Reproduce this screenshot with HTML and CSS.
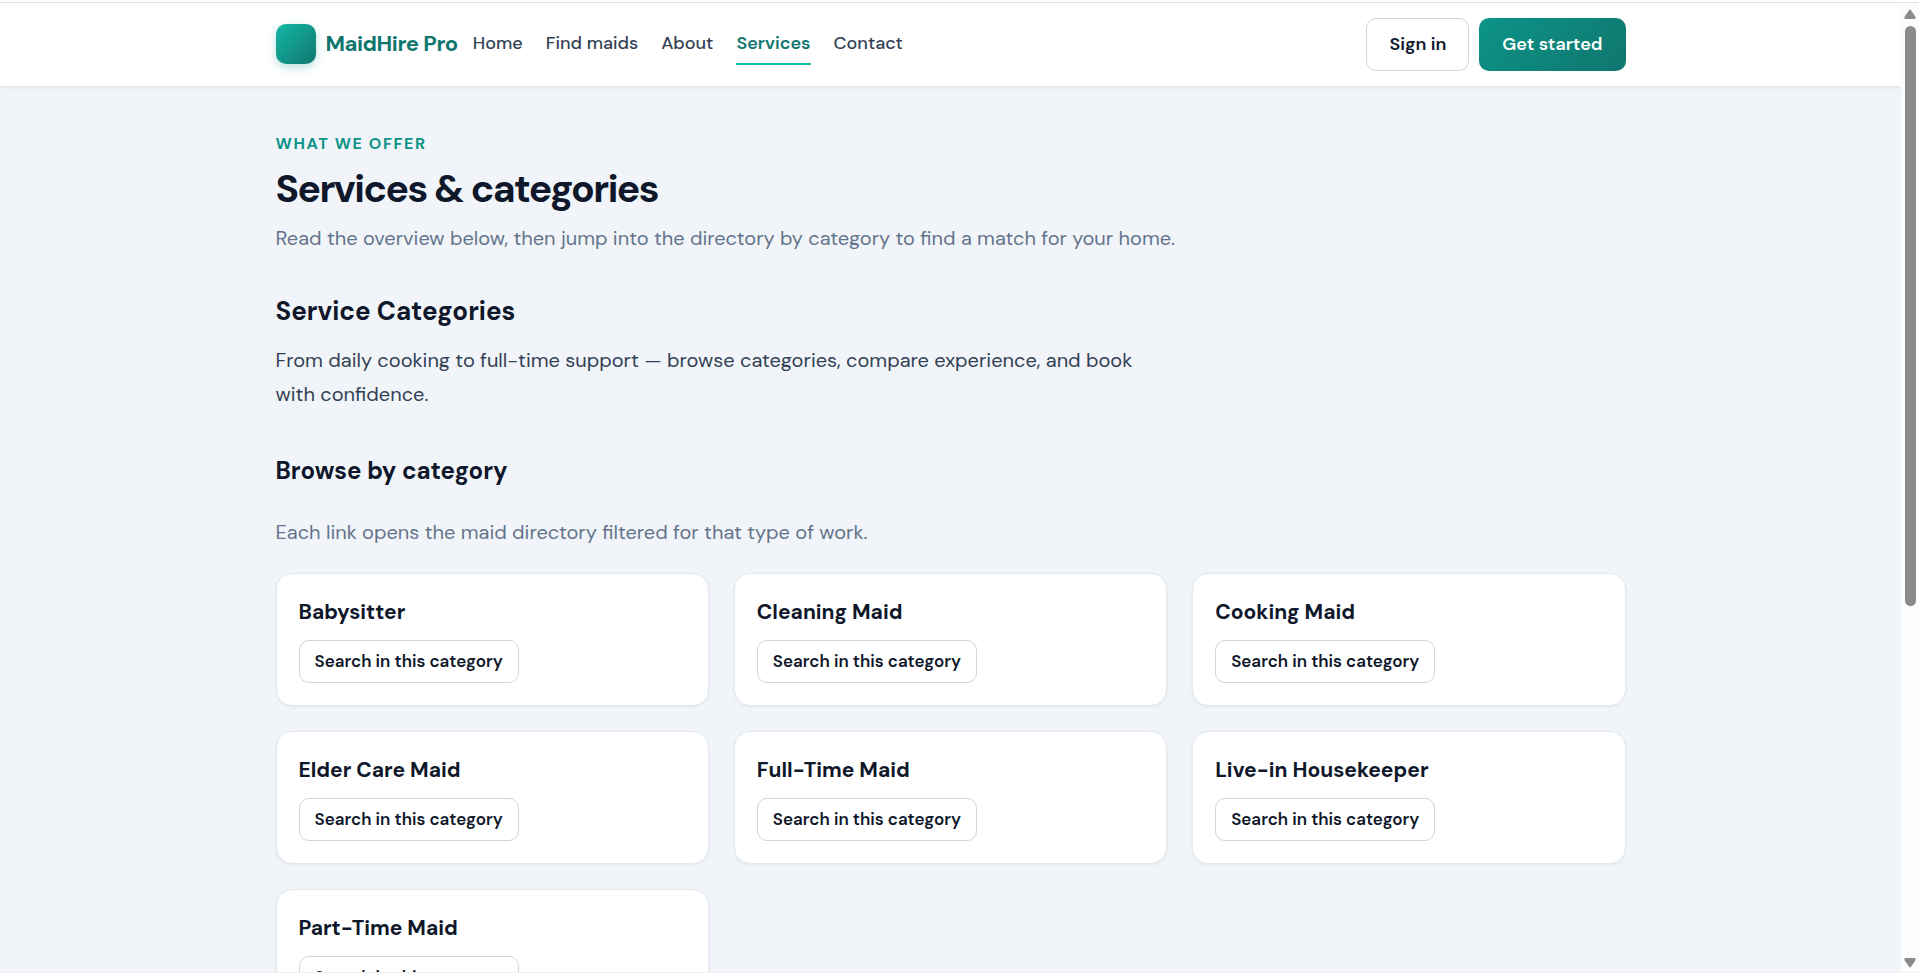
FILE: index.html
```html
<!DOCTYPE html>
<html lang="en">
<head>
  <meta charset="UTF-8">
  <meta name="viewport" content="width=device-width, initial-scale=1.0">
  <title>Services - MaidHire Pro</title>
  <link rel="stylesheet" href="styles.css">
</head>
<body>
  <div class="viewport">
    <div class="page">
      <!-- Header -->
      <header class="site-header">
        <div class="container header-inner">
          <a class="brand" href="#"><span class="brand-mark"></span>MaidHire Pro</a>
          <nav class="main-nav">
            <a href="#">Home</a>
            <a href="#">Find maids</a>
            <a href="#">About</a>
            <a class="active" href="#">Services</a>
            <a href="#">Contact</a>
          </nav>
          <div class="header-actions">
            <a class="btn btn-outline" href="#">Sign in</a>
            <a class="btn btn-primary" href="#">Get started</a>
          </div>
        </div>
      </header>

      <main class="container content">
        <p class="eyebrow">What we offer</p>
        <h1>Services &amp; categories</h1>
        <p class="lead">Read the overview below, then jump into the directory by category to find a match for your home.</p>

        <section class="overview">
          <h2>Service Categories</h2>
          <p>From daily cooking to full-time support — browse categories, compare experience, and book with confidence.</p>
        </section>

        <!-- Category cards -->
        <section class="browse">
          <h3>Browse by category</h3>
          <p class="lead">Each link opens the maid directory filtered for that type of work.</p>
          <div class="card-grid">
            <article class="card">
              <h4>Babysitter</h4>
              <a class="btn btn-outline btn-sm" href="#">Search in this category</a>
            </article>
            <article class="card">
              <h4>Cleaning Maid</h4>
              <a class="btn btn-outline btn-sm" href="#">Search in this category</a>
            </article>
            <article class="card">
              <h4>Cooking Maid</h4>
              <a class="btn btn-outline btn-sm" href="#">Search in this category</a>
            </article>
            <article class="card">
              <h4>Elder Care Maid</h4>
              <a class="btn btn-outline btn-sm" href="#">Search in this category</a>
            </article>
            <article class="card">
              <h4>Full-Time Maid</h4>
              <a class="btn btn-outline btn-sm" href="#">Search in this category</a>
            </article>
            <article class="card">
              <h4>Live-in Housekeeper</h4>
              <a class="btn btn-outline btn-sm" href="#">Search in this category</a>
            </article>
            <article class="card">
              <h4>Part-Time Maid</h4>
              <a class="btn btn-outline btn-sm" href="#">Search in this category</a>
            </article>
          </div>
        </section>
      </main>
    </div>

    <!-- Scrollbar -->
    <div class="scrollbar" aria-hidden="true">
      <svg class="arrow" viewBox="0 0 12 10"><path d="M5 1.2Q6 0 7 1.2L11.6 8Q12 10 10.500 10H1.500Q0 10 .4 8Z"/></svg>
      <div class="track"><div class="thumb"></div></div>
      <svg class="arrow" viewBox="0 0 12 10"><path d="M5 8.800Q6 10 7 8.800L11.6 2Q12 0 10.500 0H1.500Q0 0 .4 2Z"/></svg>
    </div>
  </div>
</body>
</html>
```
FILE: styles.css
```css
* {
  box-sizing: border-box;
}
body {
  margin: 0;
  font-family: "DM Sans", Inter, sans-serif;
  font-size: 20px;
  line-height: 34px;
  color: #334155;
  background: #fff;
}
h1, h2, h3, h4, p {
  margin: 0;
}
h1, h2, h3, h4 {
  color: #0f172a;
}
a {
  color: inherit;
  text-decoration: none;
}
.viewport {
  display: flex;
  height: calc(100vh - 2px);
  margin-top: 2px;
  overflow: hidden;
  border-top: 1px solid #dde1e4;
  border-bottom: 1px solid #f1f1f1;
}
.page {
  flex: 1;
  min-width: 0;
  background: #f1f5f9;
}
.container {
  width: 100%;
  max-width: 1400px;
  margin: 0 auto;
  padding: 0 25px;
}
/* Header */
.site-header {
  background: #fff;
  border-bottom: 1px solid #e2e8f0;
  box-shadow: 0 1px 3px rgba(15, 23, 42, 0.05);
}
.header-inner {
  display: flex;
  align-items: center;
  height: 83px;
}
.brand {
  display: flex;
  align-items: center;
  gap: 10px;
  margin-bottom: 2px;
  font-size: 22px;
  font-weight: 700;
  letter-spacing: -0.02em;
  white-space: nowrap;
  color: #0f766e;
}
.brand-mark {
  width: 40px;
  height: 40px;
  border-radius: 10px;
  background: linear-gradient(135deg, #14b8a6, #0f766e);
  box-shadow: 0 3px 10px rgba(13, 148, 136, 0.3);
}
.main-nav {
  display: flex;
  gap: 23px;
  margin: 0 0 3px 15px;
  font-size: 18px;
  font-weight: 500;
  white-space: nowrap;
}
.main-nav a {
  padding: 5px 0 4px;
  line-height: 32px;
  border-bottom: 2px solid transparent;
}
.main-nav .active {
  color: #0f766e;
  font-weight: 600;
  border-bottom-color: #14b8a6;
}
.header-actions {
  display: flex;
  gap: 10px;
  margin-left: auto;
}
/* Buttons */
.btn {
  display: inline-block;
  padding: 0 22px;
  border: 1px solid transparent;
  border-radius: 10px;
  font-size: 18px;
  font-weight: 600;
  line-height: 51px;
  white-space: nowrap;
}
.btn-outline {
  color: #0f172a;
  background: #fff;
  border-color: #cbd5e1;
}
.btn-primary {
  color: #fff;
  background: linear-gradient(135deg, #0d9488, #0f766e) border-box;
}
.btn-sm {
  padding: 0 15px;
  font-size: 17px;
  line-height: 41px;
}
/* Content */
.content {
  padding-top: 44px;
  padding-bottom: 60px;
}
.eyebrow {
  font-size: 16px;
  font-weight: 700;
  line-height: 26px;
  letter-spacing: 0.1em;
  text-transform: uppercase;
  color: #0d9488;
}
h1 {
  margin-top: 8px;
  font-size: 39px;
  line-height: 48px;
  letter-spacing: -0.04em;
}
.lead {
  color: #64748b;
}
h1 + .lead {
  margin-top: 8px;
}
.overview {
  max-width: 890px;
  margin-top: 38px;
}
h2 {
  margin-bottom: 14px;
  font-size: 26px;
  line-height: 36px;
}
.browse {
  margin-top: 42px;
}
h3 {
  margin-bottom: 26px;
  font-size: 24px;
  line-height: 36px;
}
.card-grid {
  display: grid;
  grid-template-columns: repeat(auto-fill, minmax(340px, 1fr));
  gap: 25px;
  margin-top: 24px;
}
.card {
  padding: 23px 22px 22px;
  background: #fff;
  border: 1px solid #e2e8f0;
  border-radius: 16px;
  box-shadow: 0 1px 3px rgba(15, 23, 42, 0.06);
}
h4 {
  margin-bottom: 12px;
  font-size: 21px;
  line-height: 31px;
}
.card .btn {
  display: block;
  width: fit-content;
}
/* Scrollbar */
.scrollbar {
  display: flex;
  flex-direction: column;
  align-items: center;
  gap: 7px;
  width: 18px;
  padding: 6px 0 4px;
  background: #fbfdfd;
}
.arrow {
  width: 12px;
  height: 10px;
  fill: #8b8b8b;
}
.track {
  flex: 1;
  width: 11px;
}
.thumb {
  height: calc(63% - 3px);
  border-radius: 6px;
  background: #8b8b8b;
}
@media (max-width: 900px) {
  .main-nav {
    display: none;
  }
}
```
